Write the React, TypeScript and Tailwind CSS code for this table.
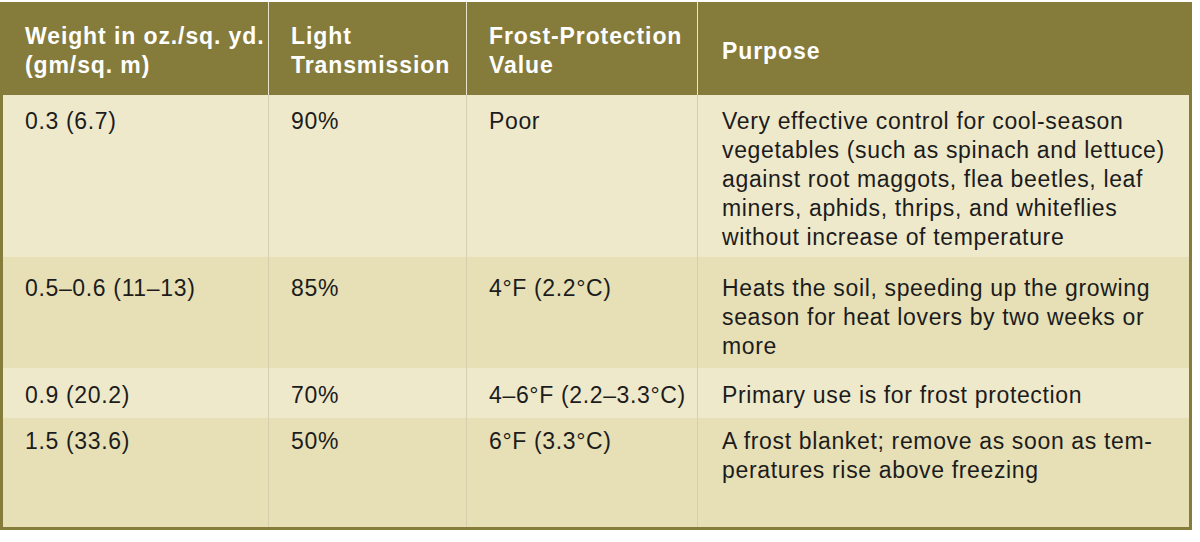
import React from "react";

const rows = [
  {
    weight: "0.3 (6.7)",
    light: "90%",
    frost: "Poor",
    purpose: [
      "Very effective control for cool-season",
      "vegetables (such as spinach and lettuce)",
      "against root maggots, flea beetles, leaf",
      "miners, aphids, thrips, and whiteflies",
      "without increase of temperature",
    ],
    bg: "bg-[#efe9cb]",
    h: "h-[162px]",
    pt: "pt-[12px]",
  },
  {
    weight: "0.5–0.6 (11–13)",
    light: "85%",
    frost: "4°F (2.2°C)",
    purpose: [
      "Heats the soil, speeding up the growing",
      "season for heat lovers by two weeks or",
      "more",
    ],
    bg: "bg-[#e7e0b6]",
    h: "h-[111px]",
    pt: "pt-[17px]",
  },
  {
    weight: "0.9 (20.2)",
    light: "70%",
    frost: "4–6°F (2.2–3.3°C)",
    purpose: ["Primary use is for frost protection"],
    bg: "bg-[#efe9cb]",
    h: "h-[50px]",
    pt: "pt-[13px]",
  },
  {
    weight: "1.5 (33.6)",
    light: "50%",
    frost: "6°F (3.3°C)",
    purpose: ["A frost blanket; remove as soon as tem-", "peratures rise above freezing"],
    bg: "bg-[#e7e0b6]",
    h: "h-[109px]",
    pt: "pt-[9px]",
  },
];

const App: React.FC = () => {
  return (
    <div className="w-[1200px] h-[542px] bg-white pt-[2px] font-['Liberation_Sans',Arial,sans-serif]">
      <div className="w-[1192px] border-x-[3px] border-b-[3px] border-[#857b3b]">
        {/* header */}
        <div className="flex h-[93px] bg-[#857b3b] text-white font-bold text-[23px] leading-[29px] tracking-[0.9px]">
          <div className="w-[266px] pl-[22px] pt-[20px] border-r border-[#e9e4cc]">
            Weight in oz./sq. yd.
            <br />
            (gm/sq. m)
          </div>
          <div className="w-[198px] pl-[22px] pt-[20px] border-r border-[#e9e4cc]">
            Light
            <br />
            Transmission
          </div>
          <div className="w-[231px] pl-[22px] pt-[20px] border-r border-[#e9e4cc]">
            Frost-Protection
            <br />
            Value
          </div>
          <div className="flex-1 pl-[24px] pt-[35px]">Purpose</div>
        </div>

        {/* body */}
        {rows.map((r, i) => (
          <div
            key={i}
            className={`flex ${r.h} ${r.bg} text-[23px] leading-[29px] tracking-[0.65px] text-[#1c1c1c]`}
          >
            <div className={`w-[266px] pl-[22px] ${r.pt} border-r border-[#d6cfae]`}>{r.weight}</div>
            <div className={`w-[198px] pl-[22px] ${r.pt} border-r border-[#d6cfae]`}>{r.light}</div>
            <div className={`w-[231px] pl-[22px] ${r.pt} border-r border-[#d6cfae]`}>{r.frost}</div>
            <div className={`flex-1 pl-[24px] ${r.pt}`}>
              {r.purpose.map((line, j) => (
                <div key={j} className="whitespace-nowrap">
                  {line}
                </div>
              ))}
            </div>
          </div>
        ))}
      </div>
    </div>
  );
};

export default App;
